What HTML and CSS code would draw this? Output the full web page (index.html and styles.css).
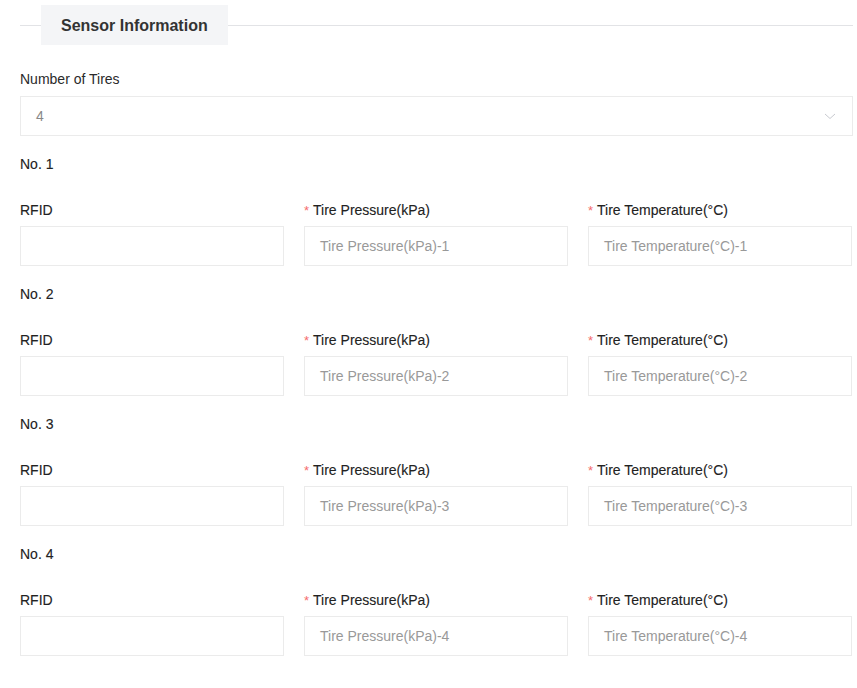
FILE: index.html
```html
<!DOCTYPE html>
<html>
<head>
<meta charset="utf-8">
<link rel="stylesheet" href="styles.css">
</head>
<body>
<div class="page">
  <div class="section-title">
    <span class="line short"></span>
    <span class="title-box">Sensor Information</span>
    <span class="line"></span>
  </div>

  <div class="field count">
    <div class="label">Number of Tires</div>
    <div class="select">
      <span class="select-value">4</span>
      <svg class="chevron" width="12" height="7" viewBox="0 0 12 7"><path d="M1 1 L6 5.5 L11 1" fill="none" stroke="#c8cad0" stroke-width="1"/></svg>
    </div>
  </div>

  <div class="tire">
    <div class="tire-title">No. 1</div>
    <div class="grid">
      <div class="field"><div class="label">RFID</div><div class="input"></div></div>
      <div class="field"><div class="label req">Tire Pressure(kPa)</div><div class="input"><span class="ph">Tire Pressure(kPa)-1</span></div></div>
      <div class="field"><div class="label req">Tire Temperature(°C)</div><div class="input"><span class="ph">Tire Temperature(°C)-1</span></div></div>
    </div>
  </div>

  <div class="tire">
    <div class="tire-title">No. 2</div>
    <div class="grid">
      <div class="field"><div class="label">RFID</div><div class="input"></div></div>
      <div class="field"><div class="label req">Tire Pressure(kPa)</div><div class="input"><span class="ph">Tire Pressure(kPa)-2</span></div></div>
      <div class="field"><div class="label req">Tire Temperature(°C)</div><div class="input"><span class="ph">Tire Temperature(°C)-2</span></div></div>
    </div>
  </div>

  <div class="tire">
    <div class="tire-title">No. 3</div>
    <div class="grid">
      <div class="field"><div class="label">RFID</div><div class="input"></div></div>
      <div class="field"><div class="label req">Tire Pressure(kPa)</div><div class="input"><span class="ph">Tire Pressure(kPa)-3</span></div></div>
      <div class="field"><div class="label req">Tire Temperature(°C)</div><div class="input"><span class="ph">Tire Temperature(°C)-3</span></div></div>
    </div>
  </div>

  <div class="tire">
    <div class="tire-title">No. 4</div>
    <div class="grid">
      <div class="field"><div class="label">RFID</div><div class="input"></div></div>
      <div class="field"><div class="label req">Tire Pressure(kPa)</div><div class="input"><span class="ph">Tire Pressure(kPa)-4</span></div></div>
      <div class="field"><div class="label req">Tire Temperature(°C)</div><div class="input"><span class="ph">Tire Temperature(°C)-4</span></div></div>
    </div>
  </div>
</div>
</body>
</html>
```

FILE: styles.css
```css
* { box-sizing: border-box; }
html, body {
  margin: 0;
  padding: 0;
  background: #ffffff;
}
body {
  font-family: "Liberation Sans", Arial, sans-serif;
  font-size: 14px;
  color: #222;
}
.page {
  width: 857px;
  padding: 5px 4px 0 20px;
}
.section-title {
  display: flex;
  align-items: center;
  height: 40px;
}
.line {
  flex: 1;
  height: 1px;
  background: #e2e3e6;
  margin-top: 1px;
}
.line.short {
  flex: 0 0 21px;
}
.title-box {
  height: 40px;
  display: flex;
  align-items: center;
  padding: 2px 20px 0 20px;
  background: #f4f5f7;
  font-size: 16px;
  font-weight: bold;
  color: #333;
}
.field.count {
  margin-top: 24px;
}
.label {
  height: 20px;
  line-height: 20px;
  color: #222;
  -webkit-text-stroke: 0.12px #222;
}
.grid .label { margin-bottom: 6px; margin-top: 1px; }
.field.count .label { margin-bottom: 7px; color: #2a2a2a; -webkit-text-stroke: 0; }
.label.req::before {
  content: "*";
  color: #f56c6c;
  margin-right: 4px;
  font-size: 13px;
  -webkit-text-stroke: 0;
}
.select {
  height: 40px;
  border: 1px solid #ebebeb;
  display: flex;
  align-items: center;
  justify-content: space-between;
  padding: 0 15px 0 15px;
}
.select-value {
  color: #888;
}
.chevron {
  display: block;
  margin-right: 1px;
}
.tire {
  margin-top: 18px;
}
.tire-title {
  height: 20px;
  line-height: 20px;
  margin-bottom: 25px;
  color: #222;
  -webkit-text-stroke: 0.12px #222;
}
.grid {
  display: grid;
  grid-template-columns: repeat(3, 264px);
  column-gap: 20px;
}
.input {
  height: 40px;
  border: 1px solid #ebebeb;
  display: flex;
  align-items: center;
  padding: 0 15px;
}
.ph {
  color: #999;
}
```
